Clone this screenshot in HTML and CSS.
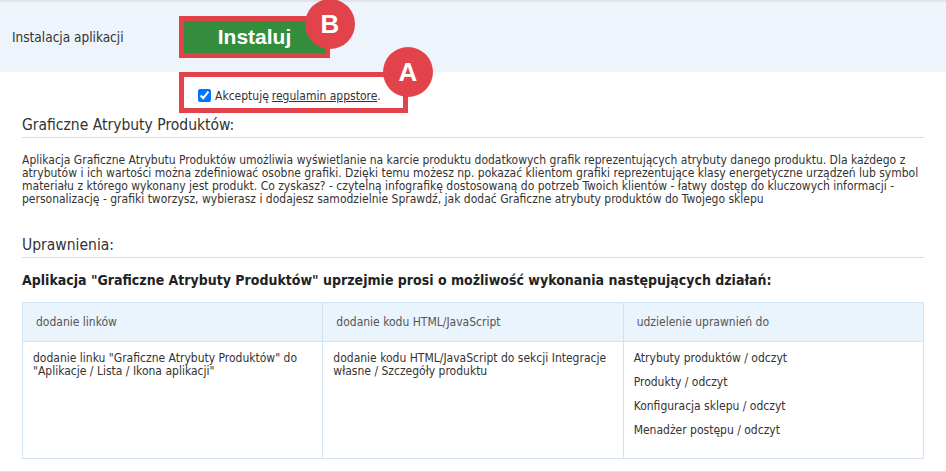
FILE: index.html
```html
<!DOCTYPE html>
<html lang="pl">
<head>
  <meta charset="UTF-8">
  <title>Instalacja aplikacji</title>
  <link rel="stylesheet" href="styles.css">
</head>
<body>

  <div class="install-bar">
    <span class="install-label">Instalacja aplikacji</span>
    <div class="marked marked-btn">
      <button class="btn-install">Instaluj</button>
      <span class="badge">B</span>
    </div>
  </div>

  <div class="accept-row">
    <div class="marked marked-accept">
      <label><input type="checkbox" checked> Akceptuję <a href="#">regulamin appstore</a>.</label>
      <span class="badge">A</span>
    </div>
  </div>

  <div class="content">
    <h2>Graficzne Atrybuty Produktów:</h2>
    <p class="desc">Aplikacja Graficzne Atrybutu Produktów umożliwia wyświetlanie na karcie produktu dodatkowych grafik reprezentujących atrybuty danego produktu. Dla każdego z atrybutów i ich wartości można zdefiniować osobne grafiki. Dzięki temu możesz np. pokazać klientom grafiki reprezentujące klasy energetyczne urządzeń lub symbol materiału z którego wykonany jest produkt. Co zyskasz? - czytelną infografikę dostosowaną do potrzeb Twoich klientów - łatwy dostęp do kluczowych informacji - personalizację - grafiki tworzysz, wybierasz i dodajesz samodzielnie Sprawdź, jak dodać Graficzne atrybuty produktów do Twojego sklepu</p>

    <h2 class="perm-title">Uprawnienia:</h2>
    <h3>Aplikacja "Graficzne Atrybuty Produktów" uprzejmie prosi o możliwość wykonania następujących działań:</h3>

    <table class="perms">
      <thead>
        <tr>
          <th>dodanie linków</th>
          <th>dodanie kodu HTML/JavaScript</th>
          <th>udzielenie uprawnień do</th>
        </tr>
      </thead>
      <tbody>
        <tr>
          <td>dodanie linku "Graficzne Atrybuty Produktów" do "Aplikacje / Lista / Ikona aplikacji"</td>
          <td>dodanie kodu HTML/JavaScript do sekcji Integracje własne / Szczegóły produktu</td>
          <td>
            <div class="perm">Atrybuty produktów / odczyt</div>
            <div class="perm">Produkty / odczyt</div>
            <div class="perm">Konfiguracja sklepu / odczyt</div>
            <div class="perm">Menadżer postępu / odczyt</div>
          </td>
        </tr>
      </tbody>
    </table>
  </div>

  <div class="page-end"></div>

</body>
</html>
```

FILE: styles.css
```css
body {
  margin: 0;
  font-family: "DejaVu Sans Condensed", "DejaVu Sans", sans-serif;
  font-size: 12px;
  color: #333;
  background: #fff;
}

.install-bar {
  display: flex;
  align-items: center;
  height: 70px;
  background: #edf4fc;
  border-top: 2px solid #e2e4e8;
}

.install-label {
  width: 167px;
  padding-left: 12px;
  font-size: 13.5px;
}

.marked {
  position: relative;
  border: 5px solid #e2434b;
}

.marked-btn {
  width: 141px;
  height: 32px;
}

.btn-install {
  display: block;
  width: 100%;
  height: 100%;
  border: none;
  background: #338d3c;
  color: #fff;
  font-family: "Liberation Sans", Arial, sans-serif;
  font-size: 21px;
  font-weight: bold;
  padding: 0;
}

.badge {
  position: absolute;
  width: 50px;
  height: 50px;
  border-radius: 50%;
  background: #e2434b;
  color: #fff;
  font-family: "Liberation Sans", Arial, sans-serif;
  font-size: 26px;
  font-weight: bold;
  line-height: 50px;
  text-align: center;
  z-index: 2;
}

.marked-btn .badge {
  top: -22px;
  right: -30px;
}

.accept-row {
  padding-left: 179px;
}

.marked-accept {
  display: flex;
  align-items: center;
  width: 205px;
  height: 31px;
  padding-left: 14px;
}

.marked-accept label {
  display: flex;
  align-items: center;
  padding-top: 6px;
}

.marked-accept input {
  width: 13px;
  height: 13px;
  margin: 0 4px 0 0;
}

.marked-accept a {
  color: #333;
  margin-left: 3px;
}

.marked-accept .badge {
  top: -30px;
  right: -30px;
}

.content {
  padding: 0 22px;
}

h2 {
  margin: 2px 0 0;
  padding-bottom: 2px;
  font-size: 15.5px;
  font-weight: normal;
  line-height: 20px;
  border-bottom: 1px solid #dcdcdc;
}

.desc {
  margin: 16px 0 0;
  line-height: 13px;
}

.perm-title {
  margin-top: 29px;
}

h3 {
  margin: 13px 0 0;
  font-size: 14px;
  line-height: 18px;
  color: #222;
}

.perms {
  width: 100%;
  margin-top: 13px;
  border-collapse: collapse;
  table-layout: fixed;
}

.perms th,
.perms td {
  border: 1px solid #d3e3f2;
  text-align: left;
  vertical-align: top;
}

.perms th {
  background: #eaf4fd;
  color: #555;
  font-weight: normal;
  height: 38px;
  padding: 0 13px;
  vertical-align: middle;
}

.perms td {
  padding: 10px;
  line-height: 13px;
  height: 95px;
}

.perm {
  margin-bottom: 11px;
}

.page-end {
  margin-top: 12px;
  height: 4px;
  border-top: 2px solid #e5e5e5;
  background: #f7f7f7;
}
```
